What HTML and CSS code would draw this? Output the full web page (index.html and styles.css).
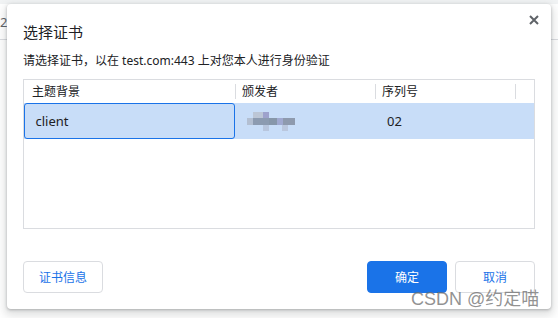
FILE: index.html
```html
<!DOCTYPE html>
<html>

<head>
    <title>选择证书</title>
    <link rel="stylesheet" href="styles.css">
</head>

<body>
    <div class="page">
        <div class="tabbar"><span class="tab-text">x2</span></div>
    </div>

    <div class="dialog">
        <div class="dialog-head">
            <h1 class="dialog-title">选择证书</h1>
            <svg class="close" viewBox="0 0 10 10">
                <path d="M1 1L9 9M9 1L1 9" />
            </svg>
        </div>
        <p class="dialog-desc">请选择证书，以在 test.com:443 上对您本人进行身份验证</p>

        <div class="cert-table">
            <div class="thead">
                <div class="th th-name">主题背景</div>
                <div class="sep"></div>
                <div class="th th-issuer">颁发者</div>
                <div class="sep"></div>
                <div class="th th-serial">序列号</div>
                <div class="sep"></div>
            </div>
            <div class="trow">
                <div class="td td-name">client</div>
                <div class="td td-issuer">
                    <svg class="mosaic" width="48" height="20" viewBox="0 0 48 20">
                        <rect x="6" y="0" width="10" height="6" fill="#bcc6d6" />
                        <rect x="16" y="0" width="6" height="6" fill="#9ea2cc" />
                        <rect x="0" y="6" width="6" height="7" fill="#b3bfd2" />
                        <rect x="6" y="6" width="16" height="7" fill="#8c9bb1" />
                        <rect x="22" y="6" width="8" height="7" fill="#8797aa" />
                        <rect x="30" y="6" width="6" height="7" fill="#a0a9d0" />
                        <rect x="36" y="6" width="12" height="7" fill="#8e9aae" />
                        <rect x="16" y="13" width="6" height="6" fill="#b8c6de" />
                        <rect x="35" y="13" width="6" height="6" fill="#bac7de" />
                    </svg>
                </div>
                <div class="td td-serial">02</div>
            </div>
        </div>

        <div class="dialog-foot">
            <button class="btn btn-info">证书信息</button>
            <button class="btn btn-primary">确定</button>
            <button class="btn">取消</button>
        </div>
    </div>

    <div class="watermark">CSDN @约定喵</div>
</body>

</html>
```

FILE: styles.css
```css
* {
    margin: 0;
    padding: 0;
    box-sizing: border-box;
}

body {
    width: 558px;
    height: 318px;
    overflow: hidden;
    position: relative;
    background-color: white;
    color: #202124;
    font-family: "Noto Sans", "Noto Sans CJK SC", sans-serif;
}

.page {
    height: 318px;
    border-top: 4px solid #f1f3f4;
}

.tabbar {
    height: 36px;
    border-bottom: 1px solid #dadce0;
    padding-top: 10px;
    font-size: 13px;
    line-height: 16px;
    color: #5f6368;
}

.tab-text {
    display: inline-block;
    margin-left: -7px;
}

.dialog {
    position: absolute;
    left: 7px;
    top: 4px;
    width: 544px;
    height: 305px;
    background-color: white;
    border-radius: 4px;
    box-shadow: 0 1px 3px rgba(60, 64, 67, 0.35), 0 4px 8px 3px rgba(60, 64, 67, 0.15);
    padding: 0 16px 16px;
    display: flex;
    flex-direction: column;
}

.dialog-head {
    display: flex;
    justify-content: space-between;
    align-items: flex-start;
    padding-top: 11px;
}

.dialog-title {
    font-size: 15px;
    line-height: 20px;
    font-weight: normal;
    margin-top: 7px;
}

.close {
    width: 10px;
    height: 10px;
    margin-right: -4px;
    stroke: #5f6368;
    stroke-width: 2;
    fill: none;
}

.dialog-desc {
    font-size: 12px;
    line-height: 16px;
    margin-top: 11px;
}

.cert-table {
    margin-top: 10px;
    width: 512px;
    height: 150px;
    border: 1px solid #dadce0;
}

.thead {
    display: flex;
    align-items: center;
    height: 23px;
    font-size: 12px;
    line-height: 16px;
}

.th-name {
    width: 211px;
    padding-left: 8px;
}

.th-issuer,
.th-serial {
    width: 139px;
    padding-left: 6px;
}

.sep {
    width: 1px;
    height: 15px;
    background-color: #dadce0;
}

.trow {
    display: flex;
    height: 36px;
    background-color: #c8ddf8;
    font-size: 13px;
}

.td {
    display: flex;
    align-items: center;
    padding-left: 12px;
}

.td-name {
    width: 211px;
    border: 1.5px solid #1a73e8;
    border-radius: 3px;
    padding-left: 10.5px;
}

.td-issuer,
.td-serial {
    width: 140px;
}

.mosaic {
    display: block;
    margin-top: 1px;
}

.dialog-foot {
    margin-top: auto;
    display: flex;
    gap: 8px;
}

.btn {
    width: 80px;
    height: 32px;
    border: 1px solid #dadce0;
    border-radius: 4px;
    background-color: white;
    color: #1a73e8;
    font-family: inherit;
    font-size: 12px;
}

.btn-info {
    margin-right: auto;
}

.btn-primary {
    background-color: #1a73e8;
    border-color: #1a73e8;
    color: white;
}

.watermark {
    position: absolute;
    left: 411px;
    top: 289px;
    font-family: "Liberation Sans", "Noto Sans CJK SC", sans-serif;
    font-size: 18px;
    line-height: 20px;
    color: rgba(110, 110, 110, 0.75);
    white-space: nowrap;
}
```
